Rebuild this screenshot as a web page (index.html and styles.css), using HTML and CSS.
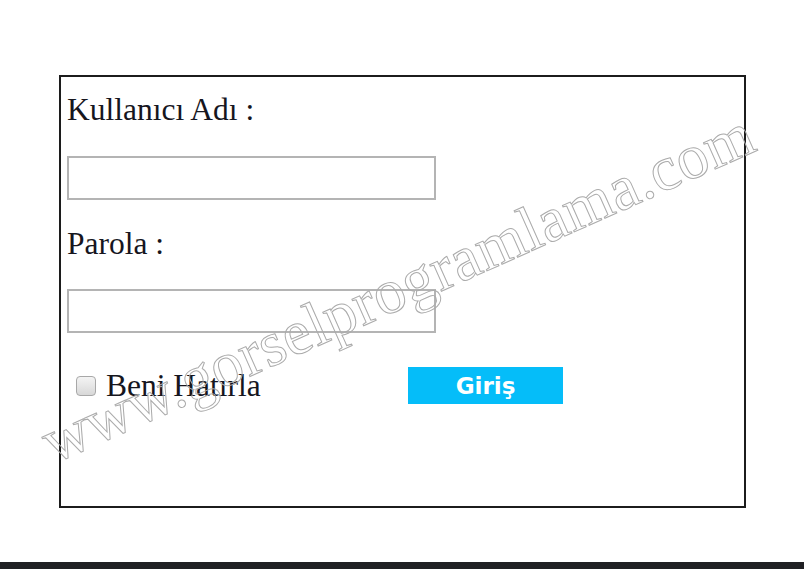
FILE: index.html
```html
<!DOCTYPE html>
<html lang="tr">
<head>
  <meta charset="UTF-8" />
  <meta name="viewport" content="width=device-width, initial-scale=1.0"/>
  <title>Giriş</title>
<link rel="stylesheet" href="styles.css">
</head>
<body>

  <div class="page">
    <form class="login" onsubmit="return false;">
      <label class="caption" for="user">Kullanıcı Adı :</label>
      <input class="field" type="text" id="user" />

      <label class="caption second" for="pass">Parola :</label>
      <input class="field" type="password" id="pass" />

      <div class="row">
        <label class="remember">
          <input type="checkbox" class="check" />
          <span>Beni Hatırla</span>
        </label>
        <button class="submit">Giriş</button>
      </div>
    </form>

    <!-- watermark from the screenshot -->
    <div class="stamp">www.gorselprogramlama.com</div>
  </div>

  <div class="footer"></div>

</body>
</html>
```

FILE: styles.css
```css
* {
  box-sizing: border-box;
}

body {
  margin: 0;
  padding: 0;
  background: white;
  font-family: 'Liberation Serif', 'Times New Roman', serif;
  color: #16161e;
}

.page {
  position: relative;
  height: 562px;
  padding: 75px 0 0 59px;
  overflow: hidden;
}

.login {
  width: 687px;
  height: 433px;
  border: 2px solid #1c1c1c;
  padding: 15px 6px 0 6px;
  display: flex;
  flex-direction: column;
  align-items: flex-start;
}

.caption {
  font-size: 31.5px;
  line-height: 36px;
  margin-bottom: 28px;
}

.caption.second {
  margin-top: 26px;
  margin-bottom: 27px;
}

.field {
  width: 369px;
  height: 44px;
  border: 2px solid #b4b4b4;
  background: white;
  margin: 0;
}

.row {
  margin-top: 34px;
  display: grid;
  grid-template-columns: 341px auto;
  align-items: center;
}

.remember {
  display: flex;
  align-items: center;
  font-size: 31.5px;
  line-height: 36px;
}

.check {
  appearance: none;
  -webkit-appearance: none;
  width: 20px;
  height: 20px;
  margin: 0 10px 0 9px;
  border: 1px solid #a8a8a8;
  border-radius: 4px;
  background: linear-gradient(#f4f4f4, #d8d8d8);
}

.submit {
  width: 155px;
  height: 37px;
  border: none;
  background-color: #05bdf9;
  color: white;
  font-family: 'DejaVu Sans', Verdana, sans-serif;
  font-weight: bold;
  font-size: 23px;
  padding: 0;
  cursor: pointer;
}

.stamp {
  position: absolute;
  left: 398px;
  top: 288px;
  transform: translate(-50%, -50%) rotate(-24deg);
  font-family: 'Liberation Serif', serif;
  font-size: 63px;
  letter-spacing: 0.4px;
  white-space: nowrap;
  color: transparent;
  -webkit-text-stroke: 1px #ababab;
  pointer-events: none;
}

.footer {
  height: 7px;
  background-color: #1f2023;
}
```
